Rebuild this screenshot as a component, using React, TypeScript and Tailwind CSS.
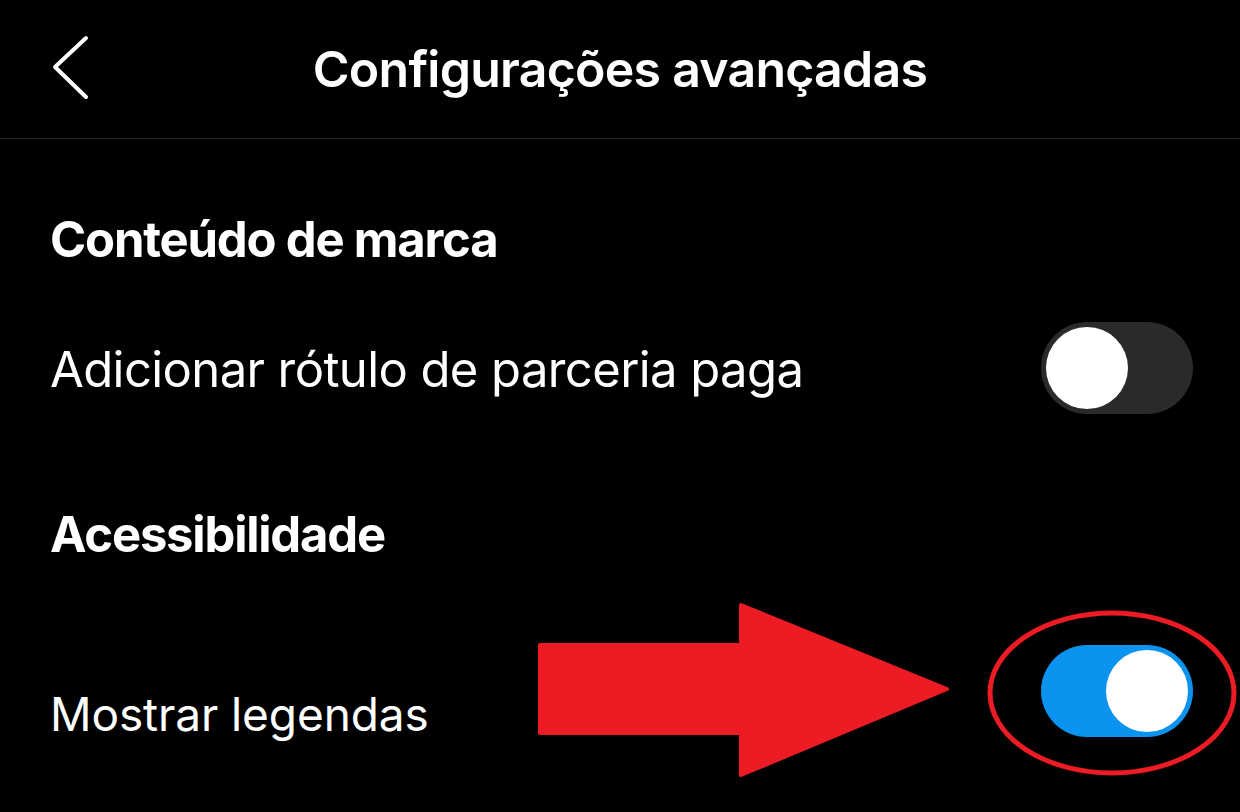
import { useState } from 'react';

type ToggleProps = {
  on: boolean;
  onChange: () => void;
};

function Toggle({ on, onChange }: ToggleProps) {
  return (
    <button
      onClick={onChange}
      className={`relative w-[152px] h-[92px] shrink-0 rounded-full ${on ? 'bg-[#0a93ef]' : 'bg-[#2a2a2c]'}`}
    >
      <span
        className={`absolute top-[5px] w-[82px] h-[82px] rounded-full bg-white ${on ? 'left-[65px]' : 'left-[5px]'}`}
      />
    </button>
  );
}

export default function App() {
  const [paidLabel, setPaidLabel] = useState(false);
  const [captions, setCaptions] = useState(true);

  return (
    <div className="relative w-[1240px] h-[812px] overflow-hidden bg-black text-white font-['Inter','Noto_Sans',sans-serif]">
      {/* cabeçalho */}
      <div className="relative flex items-center justify-center h-[139px] border-b border-[#262626]">
        <button className="absolute left-[50px] top-[34px] w-[42px] h-[68px] flex items-center justify-center">
          <svg width="42" height="68" viewBox="0 0 42 68" fill="none">
            <path d="M36 4 L5 33 L36 63" stroke="white" strokeWidth="4" strokeLinecap="round" strokeLinejoin="round" />
          </svg>
        </button>
        <h1 className="text-[50px] leading-[60px] font-semibold tracking-[-0.75px] -mt-[1px]">Configurações avançadas</h1>
      </div>

      {/* conteúdo */}
      <div className="flex flex-col pl-[50px] pr-[47px]">
        <h2 className="mt-[71px] text-[49px] leading-[60px] font-bold tracking-[-1.2px]">Conteúdo de marca</h2>

        <div className="mt-[52px] flex items-center justify-between h-[92px]">
          <span className="text-[49px] leading-[60px] tracking-[-0.6px] mt-[3px]">Adicionar rótulo de parceria paga</span>
          <Toggle on={paidLabel} onChange={() => setPaidLabel(!paidLabel)} />
        </div>

        <h2 className="mt-[91px] text-[49px] leading-[60px] font-bold tracking-[-1.2px]">Acessibilidade</h2>

        <div className="mt-[80px] flex items-start justify-between">
          <span className="mt-[39px] text-[46px] leading-[60px] tracking-[-0.1px]">Mostrar legendas</span>
          <Toggle on={captions} onChange={() => setCaptions(!captions)} />
        </div>
      </div>

      {/* anotação: seta e círculo */}
      <svg className="absolute inset-0 pointer-events-none" width="1240" height="812" viewBox="0 0 1240 812">
        <path
          d="M540 645 L741 645 L741 605 L947 689 L741 775 L741 733 L540 733 Z"
          fill="#ed1c24"
          stroke="#ed1c24"
          strokeWidth="4"
          strokeLinejoin="round"
        />
        <ellipse cx="1112" cy="693" rx="122" ry="80" fill="none" stroke="#ed1c24" strokeWidth="5" />
      </svg>
    </div>
  );
}
